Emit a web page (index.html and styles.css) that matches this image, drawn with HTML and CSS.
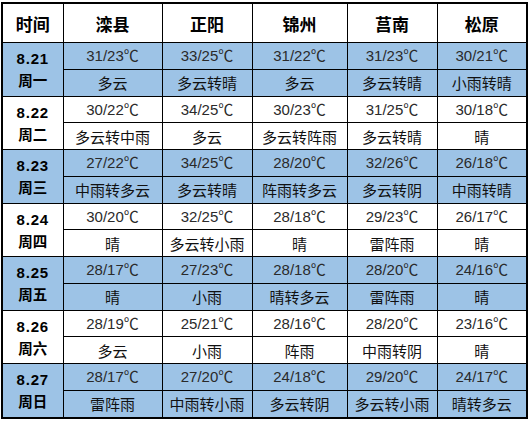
FILE: index.html
```html
<!DOCTYPE html>
<html lang="zh">
<head>
<meta charset="utf-8">
<link rel="stylesheet" href="styles.css">
</head>
<body>
<table class="wx">
  <colgroup>
    <col class="c-date"><col class="c-a"><col class="c-b"><col class="c-c"><col class="c-b"><col class="c-b">
  </colgroup>
  <thead>
    <tr class="head"><th>时间</th><th>滦县</th><th>正阳</th><th>锦州</th><th>莒南</th><th>松原</th></tr>
  </thead>
  <tbody>
    <tr class="t blue"><td class="date" rowspan="2"><span class="d">8.21</span><span class="w">周一</span></td><td>31/23<span class="u">℃</span></td><td>33/25<span class="u">℃</span></td><td>31/22<span class="u">℃</span></td><td>31/23<span class="u">℃</span></td><td>30/21<span class="u">℃</span></td></tr>
    <tr class="s blue"><td>多云</td><td>多云转晴</td><td>多云</td><td>多云转晴</td><td>小雨转晴</td></tr>

    <tr class="t"><td class="date" rowspan="2"><span class="d">8.22</span><span class="w">周二</span></td><td>30/22<span class="u">℃</span></td><td>34/25<span class="u">℃</span></td><td>30/23<span class="u">℃</span></td><td>31/25<span class="u">℃</span></td><td>30/18<span class="u">℃</span></td></tr>
    <tr class="s"><td>多云转中雨</td><td>多云</td><td>多云转阵雨</td><td>多云转晴</td><td>晴</td></tr>

    <tr class="t blue"><td class="date" rowspan="2"><span class="d">8.23</span><span class="w">周三</span></td><td>27/22<span class="u">℃</span></td><td>34/25<span class="u">℃</span></td><td>28/20<span class="u">℃</span></td><td>32/26<span class="u">℃</span></td><td>26/18<span class="u">℃</span></td></tr>
    <tr class="s blue"><td>中雨转多云</td><td>多云转晴</td><td>阵雨转多云</td><td>多云转阴</td><td>中雨转晴</td></tr>

    <tr class="t"><td class="date" rowspan="2"><span class="d">8.24</span><span class="w">周四</span></td><td>30/20<span class="u">℃</span></td><td>32/25<span class="u">℃</span></td><td>28/18<span class="u">℃</span></td><td>29/23<span class="u">℃</span></td><td>26/17<span class="u">℃</span></td></tr>
    <tr class="s"><td>晴</td><td>多云转小雨</td><td>晴</td><td>雷阵雨</td><td>晴</td></tr>

    <tr class="t blue"><td class="date" rowspan="2"><span class="d">8.25</span><span class="w">周五</span></td><td>28/17<span class="u">℃</span></td><td>27/23<span class="u">℃</span></td><td>28/18<span class="u">℃</span></td><td>28/20<span class="u">℃</span></td><td>24/16<span class="u">℃</span></td></tr>
    <tr class="s blue"><td>晴</td><td>小雨</td><td>晴转多云</td><td>雷阵雨</td><td>晴</td></tr>

    <tr class="t"><td class="date" rowspan="2"><span class="d">8.26</span><span class="w">周六</span></td><td>28/19<span class="u">℃</span></td><td>25/21<span class="u">℃</span></td><td>28/16<span class="u">℃</span></td><td>28/20<span class="u">℃</span></td><td>23/16<span class="u">℃</span></td></tr>
    <tr class="s"><td>多云</td><td>小雨</td><td>阵雨</td><td>中雨转阴</td><td>晴</td></tr>

    <tr class="t blue"><td class="date" rowspan="2"><span class="d">8.27</span><span class="w">周日</span></td><td>28/17<span class="u">℃</span></td><td>27/20<span class="u">℃</span></td><td>24/18<span class="u">℃</span></td><td>29/20<span class="u">℃</span></td><td>24/17<span class="u">℃</span></td></tr>
    <tr class="s blue"><td>雷阵雨</td><td>中雨转小雨</td><td>多云转阴</td><td>多云转小雨</td><td>晴转多云</td></tr>
  </tbody>
</table>
</body>
</html>
```
FILE: styles.css
```css
html, body {
  margin: 0;
  padding: 0;
  background: #ffffff;
}
body {
  padding: 2px 0 0 1px;
  font-family: "Liberation Sans", "Noto Sans CJK SC", sans-serif;
  color: #1a1a1a;
}
.wx {
  border-collapse: collapse;
  table-layout: fixed;
  width: 527px;
  border: 2px solid #000;
}
.c-date { width: 61px; }
.c-a { width: 99px; }
.c-b { width: 90px; }
.c-c { width: 95px; }
.wx th, .wx td {
  border: 1px solid #000;
  padding: 0;
  text-align: center;
  vertical-align: middle;
  white-space: nowrap;
  overflow: hidden;
}
.head th {
  height: 38px;
  font-family: "Noto Sans CJK SC", sans-serif;
  font-weight: 700;
  font-size: 17px;
  color: #000;
  background: #fff;
}
.blue td { background: #9dc3e6; }
.t td {
  height: 25.5px;
  font-size: 15px;
  line-height: 18px;
  color: #2a2a2a;
}
.t .u {
  font-family: "Noto Sans CJK SC", sans-serif;
  font-size: 15px;
}
.s td {
  height: 26px;
  font-family: "Noto Sans CJK SC", sans-serif;
  font-size: 15px;
  color: #111;
}
.wx td.date {
  font-weight: 700;
  color: #000;
  line-height: 21px;
}
.date .d {
  display: block;
  font-family: "Liberation Sans", sans-serif;
  font-size: 15px;
  letter-spacing: 0.8px;
}
.date .w {
  display: block;
  font-family: "Noto Sans CJK SC", sans-serif;
  font-size: 14.5px;
}
```
